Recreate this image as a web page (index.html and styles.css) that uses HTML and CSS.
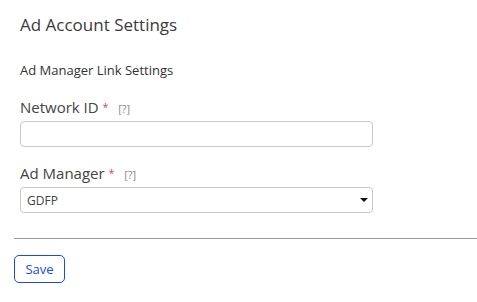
FILE: index.html
```html
<!DOCTYPE html>
<html lang="en">

<head>
    <meta charset="UTF-8">
    <meta name="viewport" content="width=device-width, initial-scale=1.0">
    <title>Ad Account Settings</title>
    <link rel="stylesheet" href="styles.css">
</head>

<body>
    <div class="page">
        <div class="content">
            <h1>Ad Account Settings</h1>
            <h2>Ad Manager Link Settings</h2>

            <!-- network id -->
            <div class="field">
                <label for="network-id">Network ID<span class="req">*</span><span class="help">[?]</span></label>
                <input type="text" id="network-id">
            </div>

            <!-- ad manager -->
            <div class="field">
                <label for="ad-manager">Ad Manager<span class="req">*</span><span class="help">[?]</span></label>
                <div class="select-wrap">
                    <select id="ad-manager">
                        <option>GDFP</option>
                    </select>
                </div>
            </div>
        </div>

        <hr class="divider">

        <button class="btn-save">Save</button>
    </div>
</body>

</html>
```

FILE: styles.css
```css
body {
    font-family: "Open Sans", "Noto Sans", sans-serif;
    margin: 0;
    padding: 0;
    color: #333;
}

.page {
    padding: 12px 0 0 14px;
}

.content {
    padding-left: 6px;
    width: 353px;
}

h1 {
    font-size: 17px;
    font-weight: 400;
    line-height: 25px;
    margin: 0;
    color: #3b3b3b;
}

h2 {
    font-size: 13px;
    font-weight: 400;
    line-height: 18px;
    margin: 24px 0 0;
}

.field {
    margin-top: 18px;
}

.field + .field {
    margin-top: 16px;
}

label {
    display: block;
    font-size: 15px;
    line-height: 20px;
    color: #444;
    margin-bottom: 2px;
}

.req {
    color: #e53935;
    font-size: 10px;
    margin-left: 4px;
    vertical-align: 2px;
}

.help {
    color: #888;
    font-size: 11px;
    margin-left: 10px;
}

input[type="text"],
select {
    display: block;
    width: 100%;
    height: 26px;
    box-sizing: border-box;
    border: 1px solid #c8c8c8;
    border-radius: 4px;
    background: #fff;
    font-family: inherit;
    font-size: 12px;
    color: #444;
    margin: 0;
}

select {
    appearance: none;
    -webkit-appearance: none;
    padding: 0 20px 0 6px;
}

.select-wrap {
    position: relative;
}

/* 下拉箭头 */
.select-wrap::after {
    content: "";
    position: absolute;
    right: 5px;
    top: 11px;
    border-left: 4px solid transparent;
    border-right: 4px solid transparent;
    border-top: 4px solid #111;
    pointer-events: none;
}

.divider {
    border: none;
    border-top: 1px solid #999;
    margin: 25px 0 16px;
}

.btn-save {
    width: 51px;
    height: 28px;
    border: 1px solid #1849f0;
    border-radius: 5px;
    background: #fff;
    color: #1849f0;
    font-family: inherit;
    font-size: 13px;
    padding: 0;
}
```
